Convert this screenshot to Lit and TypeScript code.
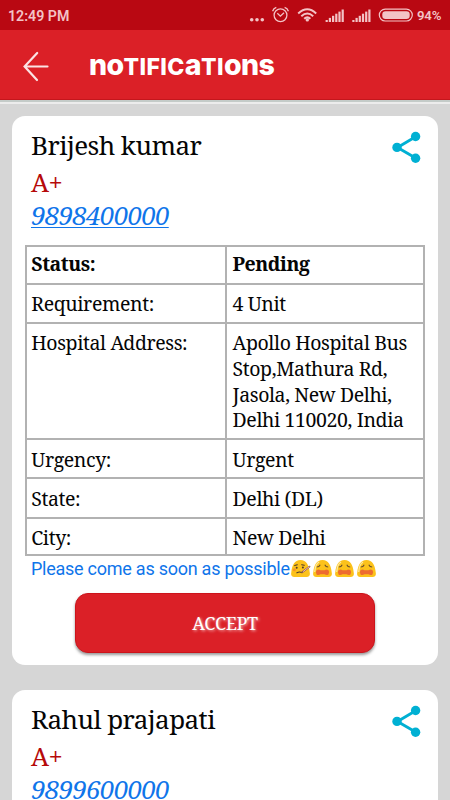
import { LitElement, html, svg, css, nothing } from "lit";
import { customElement, property } from "lit/decorators.js";

const serif = css`"Noto Serif", "Droid Serif", "DejaVu Serif Condensed", "DejaVu Serif", serif`;

@customElement("status-bar")
class StatusBar extends LitElement {
  static styles = css`
    :host { display: flex; align-items: center; height: 30px; background: #b90812; color: #f3c3c6;
      font: 500 14px/30px Roboto, sans-serif; padding: 0 8px 0 8px; }
    .time { flex: 1; padding-top: 1px; font-weight: 600; font-size: 14.2px; }
    .pct { font-weight: 600; font-size: 13.2px; letter-spacing: -0.2px; width: 25px; padding-top: 1px; }
    svg { display: block; width: 166px; height: 30px; margin-right: 3px; }
  `;
  render() {
    const bars = (x: number) => [0, 1, 2, 3, 4, 5].map(
      (i) => svg`<rect x=${x + i * 3.2} y=${20 - i * 2.1} width="2.2" height=${2 + i * 2.1}></rect>`);
    return html`
      <span class="time">12:49 PM</span>
      <svg viewBox="248 0 166 30" fill="#f3c3c6">
        <circle cx="251.7" cy="19.8" r="1.8"></circle>
        <circle cx="257" cy="19.8" r="1.8"></circle>
        <circle cx="262.3" cy="19.8" r="1.8"></circle>
        <g fill="none" stroke="#f3c3c6" stroke-width="1.3">
          <circle cx="280.5" cy="15.3" r="6.4"></circle>
          <path d="M277.3 13.3L280.4 16.2L284 12.8M272.6 11.2Q273.5 8.4 276.3 7.4M284.6 7.4Q287.5 8.4 288.4 11.2"></path>
        </g>
        <g fill="none" stroke="#f3c3c6" stroke-width="2">
          <path d="M298.2 13.4Q307.3 5.2 316.2 13.4M301.3 16.2Q307.3 10.7 313.2 16.2M304.2 18.8Q307.3 16 310.4 18.8"></path>
        </g>
        <circle cx="307.3" cy="19.9" r="1.7"></circle>
        ${bars(325.6)} ${bars(352.3)}
        <rect x="379.3" y="9.2" width="33" height="11.8" rx="5.9" fill="none" stroke="#f3c3c6" stroke-width="1.2"></rect>
        <rect x="382.3" y="11.3" width="27.4" height="7.7" rx="3.3"></rect>
      </svg>
      <span class="pct">94%</span>`;
  }
}

@customElement("app-header")
class AppHeader extends LitElement {
  static styles = css`
    :host { display: flex; align-items: center; height: 70px; box-sizing: border-box; background: #db2027;
      border-bottom: 1px solid #c4161c; }
    svg { width: 28px; height: 32px; margin-left: 22px; margin-right: 39px; margin-top: 4px; }
    .title { font: 800 23px/30px Inter, sans-serif; color: #fff; white-space: nowrap; margin-top: 2px; letter-spacing: 0.4px; }
    .low { text-transform: lowercase; font-size: 28.5px; letter-spacing: -0.6px; }
  `;
  render() {
    return html`
      <svg viewBox="0 0 28 32" fill="none" stroke="#fbe3e4" stroke-width="2.2" stroke-linecap="round">
        <path d="M15.2 2L2.6 15.5L15 29M3 15.5H25.5"></path>
      </svg>
      <span class="title"><span class="low">NO</span>TIFIC<span class="low">A</span>TI<span class="low">ONS</span></span>`;
  }
}

interface Request {
  name: string;
  group: string;
  phone: string;
  rows?: [string, string][];
  message?: string;
}

const face = svg`
  <path d="M.8 13.2C0 16.6 1.8 18 4.5 18H15.5C18.2 18 20 16.6 19.2 13.2C18.4 6 16 1 10 1S1.6 6 .8 13.2Z" fill="#fcc21b"></path>`;

const sickFace = html`<svg class="emoji" viewBox="0 0 20 19">${face}
  <g fill="none" stroke="#513c2b" stroke-width="1.1" stroke-linecap="round">
    <path d="M4.2 6.6L6.8 5.7M11.2 5.7L13.8 6.3M6.4 13.8Q9 12.2 11.2 13.6"></path>
  </g>
  <circle cx="6.2" cy="8.8" r="1" fill="#513c2b"></circle><circle cx="12.4" cy="8.6" r="1" fill="#513c2b"></circle>
  <circle cx="3.8" cy="10.7" r="1.5" fill="#f79329"></circle>
  <path d="M11.6 13.3L19 7.6" stroke="#8c5a4b" stroke-width="1.8" stroke-linecap="round"></path>
  <path d="M12.4 12.7L18.8 7.7" stroke="#f3b9b0" stroke-width="1"></path></svg>`;

const wearyFace = html`<svg class="emoji" viewBox="0 0 20 19">${face}
  <path d="M2.2 13C2.6 7.5 4 4.2 6.6 3" fill="none" stroke="#fde9a0" stroke-width="1.3"></path>
  <path d="M4.3 8Q6.8 8 7.7 5.8M12.3 5.8Q13.2 8 15.7 8" fill="none" stroke="#6b4f2b" stroke-width="1.1"></path>
  <path d="M4 11.2Q6 10 8 11.2H12Q14 10 16 11.2Q17.5 13.5 16 15.4Q14 16.5 12 15.2H8Q6 16.5 4 15.4Q2.5 13.5 4 11.2Z" fill="#ed6c30"></path></svg>`;

@customElement("request-card")
class RequestCard extends LitElement {
  @property({ attribute: false }) data!: Request;

  static styles = css`
    :host { display: flex; flex-direction: column; height: 549px; box-sizing: border-box; flex: none;
      background: #fff; border-radius: 13px; font-family: ${serif}; color: #050505; padding: 10px 13px 0; }
    .top { display: flex; justify-content: space-between; padding: 0 4px 0 6px; height: 119px; }
    .name { font-size: 26px; line-height: 38px; letter-spacing: -0.56px; white-space: nowrap; }
    .group { font-size: 25.5px; line-height: 37px; letter-spacing: -0.5px; color: #b60a0a; }
    .phone { display: block; width: max-content; font-size: 26px; line-height: 28px; letter-spacing: -0.76px; font-style: italic; color: #0f75ea;
      text-decoration: underline; text-decoration-thickness: 1px; text-underline-offset: 2px; }
    .share { width: 32px; height: 34px; margin-top: 4px; }
    .grid { display: grid; grid-template-columns: 198px 198px; width: 400px; box-sizing: border-box;
      grid-template-rows: 38px 39px 116px 39px 40px 36px; border: 2px solid #b2b2b2; height: 311px;
      font-size: 19.5px; line-height: 25.8px; letter-spacing: -0.4px; }
    .cell { padding: 6px 0 0 4.3px; border-bottom: 2px solid #b2b2b2; white-space: pre; }
    .cell.value { border-left: 2px solid #b2b2b2; padding-left: 5.6px; }
    .cell.low { padding-top: 7px; }
    .cell.last { border-bottom: 0; padding-top: 6px; }
    .cell.strong { font-weight: 700; letter-spacing: -0.45px; padding-top: 4px; }
    .message { display: flex; align-items: center; padding-left: 6px; height: 25px; font: 18px/25px Roboto, sans-serif;
      letter-spacing: -0.25px; color: #0f75ea; }
    .emoji { width: 21px; height: 19px; margin-right: 1px; }
    .accept { align-self: center; width: 300px; height: 60px; margin-top: 12px; border: 1px solid #cc141b; border-radius: 13px; padding: 0;
      background: #db2027; box-shadow: 0 2px 3px #0006; color: #fff; font: 18px ${serif}; letter-spacing: -0.35px; text-shadow: 1px 1px 3px #fffa; }
  `;

  render() {
    const d = this.data;
    return html`
      <div class="top">
        <div>
          <div class="name">${d.name}</div>
          <div class="group">${d.group}</div>
          <a class="phone">${d.phone}</a>
        </div>
        <svg class="share" viewBox="0 0 32 34" fill="#00b0d3">
          <path d="M27 6.5L8.5 17.4L27 28.3" fill="none" stroke="#00b0d3" stroke-width="2.9"></path>
          <circle cx="26.6" cy="6.5" r="4.7"></circle><circle cx="8" cy="17.4" r="4.7"></circle>
          <circle cx="26.6" cy="28.3" r="4.7"></circle>
        </svg>
      </div>
      ${d.rows ? this.details(d.rows, d.message ?? "") : nothing}`;
  }

  private details(rows: [string, string][], message: string) {
    return html`
      <div class="grid">
        ${rows.map(([k, v], i) => {
          const extra = (i === 0 ? " strong" : "") + (i > 2 ? " low" : "") + (i === rows.length - 1 ? " last" : "");
          return html`<div class="cell${extra}">${k}</div><div class="cell value${extra}">${v}</div>`;
        })}
      </div>
      <div class="message"><span>${message}</span>${sickFace}${wearyFace}${wearyFace}${wearyFace}</div>
      <button class="accept">ACCEPT</button>`;
  }
}

const requests: Request[] = [
  {
    name: "Brijesh kumar",
    group: "A+",
    phone: "9898400000",
    rows: [
      ["Status:", "Pending"],
      ["Requirement:", "4 Unit"],
      ["Hospital Address:", "Apollo Hospital Bus\nStop,Mathura Rd,\nJasola, New Delhi,\nDelhi 110020, India"],
      ["Urgency:", "Urgent"],
      ["State:", "Delhi (DL)"],
      ["City:", "New Delhi"],
    ],
    message: "Please come as soon as possible",
  },
  { name: "Rahul prajapati", group: "A+", phone: "9899600000" },
];

@customElement("app-root")
class AppRoot extends LitElement {
  static styles = css`
    :host { display: flex; flex-direction: column; width: 450px; height: 800px; overflow: hidden; background: #d6d6d6; }
    status-bar, app-header { flex: none; }
    .edge { flex: none; height: 4px; background: linear-gradient(#c4cbc8 0 1.5px, #ececec 2px); }
    .list { display: flex; flex-direction: column; gap: 25px; padding: 12px 12px 0; flex: 1; min-height: 0; overflow: hidden; }
  `;
  render() {
    return html`
      <status-bar></status-bar>
      <app-header></app-header>
      <div class="edge"></div>
      <div class="list">${requests.map((r) => html`<request-card .data=${r}></request-card>`)}</div>`;
  }
}
